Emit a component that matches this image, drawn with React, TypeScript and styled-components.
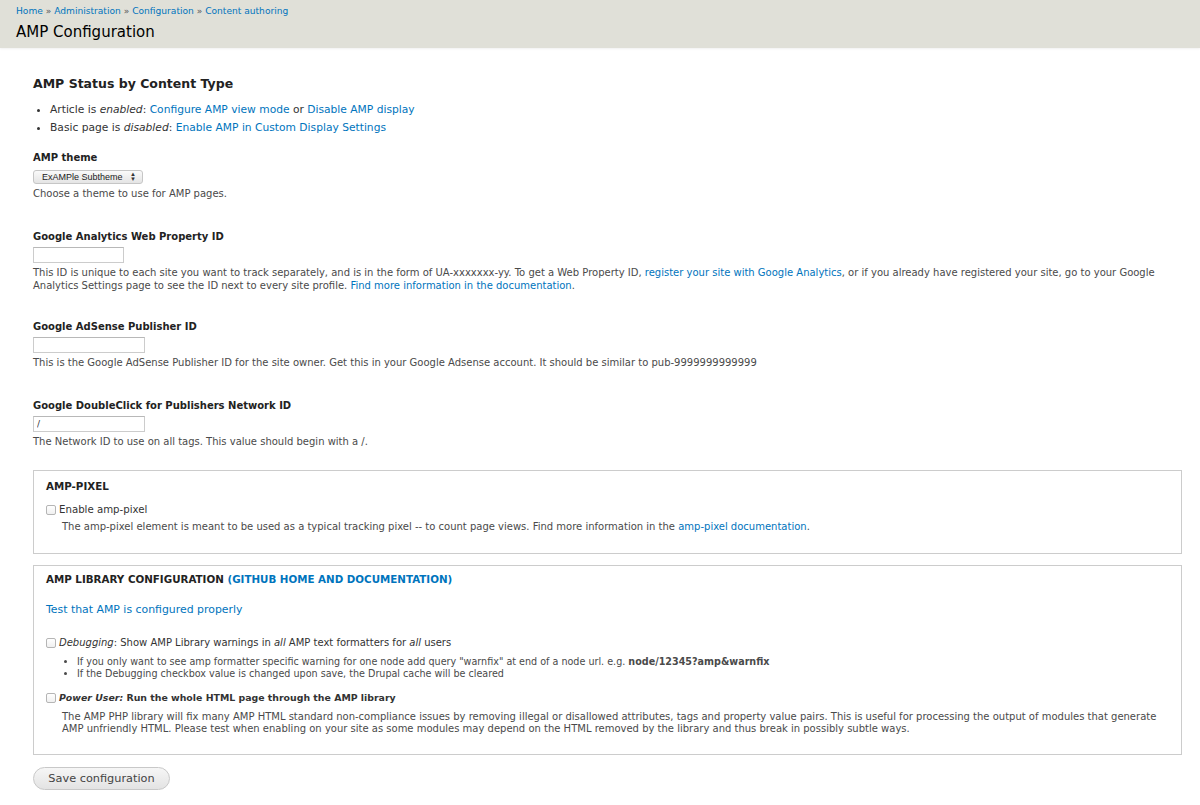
import React from "react";
import styled, { createGlobalStyle } from "styled-components";

const Global = createGlobalStyle`
  html, body { margin: 0; padding: 0; background: #fff; }
  body { font-family: "DejaVu Sans", "Liberation Sans", sans-serif; color: #333; }
  * { box-sizing: border-box; }
`;

const Header = styled.header`
  background: #e0e0d8;
  height: 48px;
  padding: 5px 16px 0;
  box-shadow: 0 1px 2px rgba(0,0,0,0.06);
`;

const Breadcrumb = styled.div`
  font-size: 9.1px;
  line-height: 12px;
  color: #555;
  a { color: #0074bd; text-decoration: none; }
`;

const Title = styled.h1`
  margin: 6px 0 0;
  font-size: 15px;
  font-weight: normal;
  color: #000;
  line-height: 18px;
`;

const Main = styled.main`
  padding: 27px 18px 20px 33px;
`;

const Link = styled.a`
  color: #0074bd;
  text-decoration: none;
`;

const H3 = styled.h3`
  margin: 0;
  font-size: 12.5px;
  font-weight: bold;
  color: #222;
  line-height: 18px;
`;

const StatusList = styled.ul`
  margin: 8px 0 0;
  padding: 0 0 0 17px;
  font-size: 10.7px;
  line-height: 18px;
  color: #333;
  li { padding: 0; }
`;

const Field = styled.div<{ $mt: number }>`
  margin-top: ${(p) => p.$mt}px;
`;

const Label = styled.label`
  display: block;
  font-size: 10px;
  font-weight: bold;
  color: #222;
  line-height: 14px;
`;

const Select = styled.div`
  display: inline-flex;
  align-items: center;
  justify-content: space-between;
  margin-top: 3px;
  width: 110px;
  height: 14px;
  padding: 0 6px 0 8px;
  border: 1px solid #c6c6c6;
  border-radius: 3px;
  background: linear-gradient(#fafafa, #e4e4e4);
  font-family: "Liberation Sans", sans-serif;
  font-size: 9px;
  color: #222;
`;

const Arrows = styled.span`
  font-size: 6px;
  line-height: 5px;
  display: flex;
  flex-direction: column;
  color: #333;
`;

const TextInput = styled.input<{ $w: number }>`
  display: block;
  margin-top: 3px;
  width: ${(p) => p.$w}px;
  height: 16px;
  border: 1px solid #ccc;
  border-top-color: #b8b8b8;
  padding: 0 3px;
  font-family: "DejaVu Sans", sans-serif;
  font-size: 9px;
  color: #333;
  outline: none;
`;

const Desc = styled.div`
  margin-top: 3px;
  font-size: 10px;
  line-height: 13px;
  color: #4a4a4a;
`;

const Fieldset = styled.fieldset<{ $h: number; $mt: number; $pt: number }>`
  margin: ${(p) => p.$mt}px 0 0;
  padding: ${(p) => p.$pt}px 12px 0;
  border: 1px solid #ccc;
  height: ${(p) => p.$h}px;
  min-width: 0;
`;

const Legend = styled.div`
  font-size: 10.3px;
  font-weight: bold;
  text-transform: uppercase;
  color: #222;
  line-height: 14px;
`;

const CheckRow = styled.div<{ $mt: number; $fs: number }>`
  display: flex;
  align-items: center;
  gap: 3px;
  margin-top: ${(p) => p.$mt}px;
  font-size: ${(p) => p.$fs}px;
  line-height: 14px;
  color: #333;
`;

const Box = styled.span`
  width: 10px;
  height: 10px;
  border: 1px solid #b5b5b5;
  border-radius: 2px;
  background: linear-gradient(#fff, #f0f0f0);
  flex: none;
`;

const Indented = styled.div<{ $mt: number }>`
  padding-left: 16px;
  margin-top: ${(p) => p.$mt}px;
  font-size: 10px;
  line-height: 12px;
  color: #4a4a4a;
`;

const SubList = styled.ul`
  margin: 6px 0 0;
  padding: 0 0 0 31px;
  font-size: 9.6px;
  line-height: 12px;
  color: #4a4a4a;
`;

const TestLink = styled(Link)`
  display: block;
  margin-top: 17px;
  font-size: 10.9px;
  line-height: 14px;
`;

const Button = styled.button`
  margin-top: 12px;
  height: 23px;
  width: 137px;
  padding: 0;
  border: 1px solid #c8c8c8;
  border-radius: 12px;
  background: linear-gradient(#f6f6f6, #e3e3e3);
  font-family: "DejaVu Sans", sans-serif;
  font-size: 11.3px;
  color: #444;
`;

export default function App() {
  return (
    <>
      <Global />
      <Header>
        <Breadcrumb>
          <a href="#">Home</a> » <a href="#">Administration</a> » <a href="#">Configuration</a> » <a href="#">Content authoring</a>
        </Breadcrumb>
        <Title>AMP Configuration</Title>
      </Header>
      <Main>
        <H3>AMP Status by Content Type</H3>
        <StatusList>
          <li>
            Article is <em>enabled</em>: <Link href="#">Configure AMP view mode</Link> or <Link href="#">Disable AMP display</Link>
          </li>
          <li>
            Basic page is <em>disabled</em>: <Link href="#">Enable AMP in Custom Display Settings</Link>
          </li>
        </StatusList>

        <Field $mt={14}>
          <Label>AMP theme</Label>
          <Select>
            <span>ExAMPle Subtheme</span>
            <Arrows><span>▲</span><span>▼</span></Arrows>
          </Select>
          <Desc>Choose a theme to use for AMP pages.</Desc>
        </Field>

        <Field $mt={30}>
          <Label>Google Analytics Web Property ID</Label>
          <TextInput $w={91} defaultValue="" />
          <Desc>
            This ID is unique to each site you want to track separately, and is in the form of UA-xxxxxxx-yy. To get a Web Property ID, <Link href="#">register your site with Google Analytics</Link>, or if you already have registered your site, go to your Google Analytics Settings page to see the ID next to every site profile. <Link href="#">Find more information in the documentation</Link>.
          </Desc>
        </Field>

        <Field $mt={28}>
          <Label>Google AdSense Publisher ID</Label>
          <TextInput $w={112} defaultValue="" />
          <Desc>This is the Google AdSense Publisher ID for the site owner. Get this in your Google Adsense account. It should be similar to pub-9999999999999</Desc>
        </Field>

        <Field $mt={30}>
          <Label>Google DoubleClick for Publishers Network ID</Label>
          <TextInput $w={112} defaultValue="/" />
          <Desc>The Network ID to use on all tags. This value should begin with a /.</Desc>
        </Field>

        <Fieldset $mt={22} $h={84} $pt={8}>
          <Legend>AMP-pixel</Legend>
          <CheckRow $mt={10} $fs={10.2}>
            <Box /> Enable amp-pixel
          </CheckRow>
          <Indented $mt={4}>
            The amp-pixel element is meant to be used as a typical tracking pixel -- to count page views. Find more information in the <Link href="#">amp-pixel documentation</Link>.
          </Indented>
        </Fieldset>

        <Fieldset $mt={11} $h={190} $pt={6}>
          <Legend>
            AMP Library Configuration <Link href="#">(GitHub home and documentation)</Link>
          </Legend>
          <TestLink href="#">Test that AMP is configured properly</TestLink>
          <CheckRow $mt={19} $fs={10}>
            <Box /> <span><em>Debugging</em>: Show AMP Library warnings in <em>all</em> AMP text formatters for <em>all</em> users</span>
          </CheckRow>
          <SubList>
            <li>If you only want to see amp formatter specific warning for one node add query "warnfix" at end of a node url. e.g. <b>node/12345?amp&amp;warnfix</b></li>
            <li>If the Debugging checkbox value is changed upon save, the Drupal cache will be cleared</li>
          </SubList>
          <CheckRow $mt={11} $fs={9.4}>
            <Box /> <b><em>Power User:</em> Run the whole HTML page through the AMP library</b>
          </CheckRow>
          <Indented $mt={6}>
            The AMP PHP library will fix many AMP HTML standard non-compliance issues by removing illegal or disallowed attributes, tags and property value pairs. This is useful for processing the output of modules that generate AMP unfriendly HTML. Please test when enabling on your site as some modules may depend on the HTML removed by the library and thus break in possibly subtle ways.
          </Indented>
        </Fieldset>

        <Button>Save configuration</Button>
      </Main>
    </>
  );
}
